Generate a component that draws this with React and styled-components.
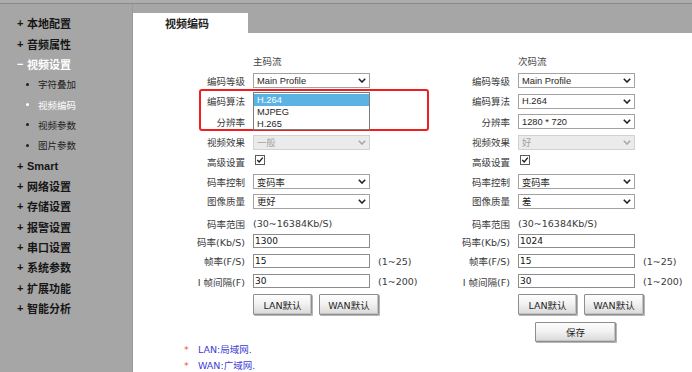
import React from 'react';
import styled, { createGlobalStyle } from 'styled-components';

const GlobalStyle = createGlobalStyle`
  html, body { margin: 0; padding: 0; }
  body {
    background: #a6a6a6;
    font-family: "DejaVu Sans", "Noto Sans CJK SC", sans-serif;
    -webkit-font-smoothing: antialiased;
  }
  * { box-sizing: border-box; }
`;

const Page = styled.div`
  width: 692px;
  height: 372px;
  overflow: hidden;
  display: flex;
  flex-direction: column;
  background: #a6a6a6;
`;

const TopEdge = styled.div`
  flex: none;
  height: 4px;
  background: #adadad;
  border-bottom: 1px solid #8a8a8a;
`;

const Body = styled.div`
  flex: 1;
  display: flex;
  min-height: 0;
`;

const Sidebar = styled.nav`
  flex: none;
  width: 133px;
  border-right: 1px solid #9a9a9a;
  padding: 9px 0 0 17px;
  display: flex;
  flex-direction: column;
`;

const NavItem = styled.div`
  height: 20.36px;
  display: flex;
  align-items: center;
  color: ${p => (p.$active ? '#ffffff' : '#161616')};
  font-family: ${p => (p.$latin ? '"Liberation Sans", "Noto Sans CJK SC", sans-serif' : '"Noto Sans CJK SC", sans-serif')};
  font-size: 11px;
  font-weight: 700;
  white-space: nowrap;
`;

const Marker = styled.span`
  width: 10px;
  font-family: "Liberation Sans", sans-serif;
  font-size: 11px;
  font-weight: 700;
`;

const SubItem = styled.div`
  height: 20.36px;
  display: flex;
  align-items: center;
  padding-left: 9px;
  color: ${p => (p.$active ? '#ffffff' : '#222222')};
  font-family: "Noto Sans CJK SC", sans-serif;
  font-size: 9.5px;
  white-space: nowrap;
`;

const Dot = styled.span`
  width: 3px;
  height: 3px;
  border-radius: 50%;
  background: currentColor;
  margin-right: 9px;
`;

const Main = styled.main`
  flex: 1;
  display: flex;
  flex-direction: column;
  min-width: 0;
`;

const TabStrip = styled.div`
  flex: none;
  height: 29px;
  display: flex;
  align-items: flex-end;
`;

const Tab = styled.div`
  width: 115px;
  height: 20px;
  background: #ffffff;
  padding-left: 32px;
  display: flex;
  align-items: center;
  font-family: "Noto Sans CJK SC", sans-serif;
  font-size: 11px;
  font-weight: 700;
  color: #222;
`;

const Content = styled.section`
  flex: 1;
  position: relative;
  background: #ffffff;
  padding-top: 18px;
`;

const Form = styled.div`
  display: flex;
  align-items: flex-start;
  padding-left: 32px;
`;

const Panel = styled.div`
  width: 265px;
  display: grid;
  grid-template-columns: 80px 117px 52px;
  column-gap: 8px;
  grid-template-rows: 19px 21px 20px 21px 20px 20px 19px 20px 21px 19px 20px 21px 25px ${p => (p.$save ? '25px' : '')};
  align-items: center;
  font-size: 9.5px;
  color: #3a3a3a;
`;

const Heading = styled.div`
  grid-column: 2;
  font-family: "Noto Sans CJK SC", sans-serif;
  font-size: 9.5px;
  color: #444;
`;

const Label = styled.div`
  grid-column: 1;
  justify-self: end;
  white-space: nowrap;
  padding-top: ${p => p.$shift || 0}px;
`;

const Cell = styled.div`
  grid-column: 2;
  position: relative;
  min-height: 15px;
  padding-top: ${p => p.$shift || 0}px;
  white-space: nowrap;
`;

const Suffix = styled.div`
  grid-column: 3;
  white-space: nowrap;
`;

const SelectBox = styled.div`
  height: 15px;
  display: flex;
  align-items: center;
  justify-content: space-between;
  padding: 0 3px 0 3px;
  border: 1px solid ${p => (p.$disabled ? '#d2d2d2' : '#a2a2a2')};
  background: ${p => (p.$disabled ? '#ebebeb' : '#ffffff')};
  color: ${p => (p.$disabled ? '#a3a3a3' : '#1e1e1e')};
  font-family: "Liberation Sans", "Noto Sans CJK SC", sans-serif;
  font-size: 9.3px;
`;

const ListBox = styled.div`
  position: absolute;
  z-index: 2;
  left: 0;
  top: -2px;
  width: 117px;
  height: 38px;
  padding: 1px 0;
  background: #ffffff;
  border: 1px solid #7c7c7c;
  font-family: "Liberation Sans", sans-serif;
  font-size: 9.3px;
`;

const ListOption = styled.div`
  height: 12px;
  line-height: 12px;
  padding-left: 3px;
  background: ${p => (p.$selected ? '#5bb3e4' : 'transparent')};
  color: ${p => (p.$selected ? '#ffffff' : '#1e1e1e')};
`;

const TextInput = styled.div`
  height: 14px;
  border: 1px solid #8c8c8c;
  background: #fff;
  padding-left: 1px;
  font-size: 9px;
  line-height: 12px;
  color: #111;
`;

const CheckWrap = styled.div`
  display: flex;
  padding-left: 2px;
`;

const ButtonRow = styled.div`
  grid-column: 2 / 4;
  display: flex;
  gap: 7px;
`;

const Button = styled.button`
  width: ${p => p.$w || 59}px;
  height: ${p => p.$h || 21}px;
  margin: 0;
  padding: 0;
  border: 1px solid #8e8e8e;
  border-radius: 1px;
  background: linear-gradient(#fefefe, #f2f2f2 45%, #d9d9d9);
  box-shadow: inset -1px -1px 0 #c4c4c4, 1px 1px 0 #b5b5b5;
  font-family: "DejaVu Sans", "Noto Sans CJK SC", sans-serif;
  font-size: 9.5px;
  color: #262626;
`;

const SaveCell = styled.div`
  grid-column: 2;
  align-self: end;
  padding-left: 17px;
`;

const Notes = styled.div`
  padding-left: 51px;
  font-size: 9.5px;
  line-height: 16px;
`;

const Note = styled.div`
  display: flex;
  color: #3d3dd4;
`;

const Star = styled.span`
  width: 14px;
  color: #ff4b4b;
`;

const Annotation = styled.div`
  position: absolute;
  left: 66px;
  top: 56px;
  width: 230px;
  height: 42px;
  border: 2px solid #f01e1e;
  border-radius: 3px;
  pointer-events: none;
`;

const Chevron = ({ color }) => (
  <svg width="8" height="5" viewBox="0 0 8 5">
    <polyline points="0.8,0.8 4,4 7.2,0.8" fill="none" stroke={color} strokeWidth="1.6" />
  </svg>
);

const Select = ({ value, disabled }) => (
  <SelectBox $disabled={disabled}>
    <span>{value}</span>
    <Chevron color={disabled ? '#a8a8a8' : '#1d2330'} />
  </SelectBox>
);

const Checkbox = () => (
  <svg width="10" height="10" viewBox="0 0 10 10">
    <rect x="0.5" y="0.5" width="9" height="9" fill="#fff" stroke="#5a5a5a" />
    <polyline points="2.3,5 4.2,7 7.8,2.6" fill="none" stroke="#1a1a1a" strokeWidth="1.3" />
  </svg>
);

const StreamPanel = ({ title, codec, resolution, effect, quality, bitrate, open, save }) => (
  <Panel $save={save}>
    <Heading>{title}</Heading>
    <Label>编码等级</Label>
    <Cell><Select value="Main Profile" /></Cell>
    <Label>编码算法</Label>
    <Cell>
      <Select value={codec} />
      {open && (
        <ListBox>
          <ListOption $selected>H.264</ListOption>
          <ListOption>MJPEG</ListOption>
          <ListOption>H.265</ListOption>
        </ListBox>
      )}
    </Cell>
    <Label>分辨率</Label>
    <Cell>{!open && <Select value={resolution} />}</Cell>
    <Label>视频效果</Label>
    <Cell><Select value={effect} disabled /></Cell>
    <Label>高级设置</Label>
    <Cell><CheckWrap><Checkbox /></CheckWrap></Cell>
    <Label>码率控制</Label>
    <Cell><Select value="变码率" /></Cell>
    <Label>图像质量</Label>
    <Cell><Select value={quality} /></Cell>
    <Label $shift={4}>码率范围</Label>
    <Cell $shift={4}>(30~16384Kb/S)</Cell>
    <Label>码率(Kb/S)</Label>
    <Cell><TextInput>{bitrate}</TextInput></Cell>
    <Label>帧率(F/S)</Label>
    <Cell><TextInput>15</TextInput></Cell>
    <Suffix>(1~25)</Suffix>
    <Label>I 帧间隔(F)</Label>
    <Cell><TextInput>30</TextInput></Cell>
    <Suffix>(1~200)</Suffix>
    <ButtonRow>
      <Button $w={59}>LAN默认</Button>
      <Button $w={60}>WAN默认</Button>
    </ButtonRow>
    {save && (
      <SaveCell>
        <Button $w={81} $h={20}>保存</Button>
      </SaveCell>
    )}
  </Panel>
);

const topItems = ['本地配置', '音频属性'];
const subItems = ['字符叠加', '视频编码', '视频参数', '图片参数'];
const lowerItems = ['网络设置', '存储设置', '报警设置', '串口设置', '系统参数', '扩展功能', '智能分析'];

export default function App() {
  return (
    <Page>
      <GlobalStyle />
      <TopEdge />
      <Body>
        <Sidebar>
          {topItems.map(t => (
            <NavItem key={t}><Marker>+</Marker>{t}</NavItem>
          ))}
          <NavItem $active><Marker>−</Marker>视频设置</NavItem>
          {subItems.map(t => (
            <SubItem key={t} $active={t === '视频编码'}><Dot />{t}</SubItem>
          ))}
          <NavItem $latin><Marker>+</Marker>Smart</NavItem>
          {lowerItems.map(t => (
            <NavItem key={t}><Marker>+</Marker>{t}</NavItem>
          ))}
        </Sidebar>
        <Main>
          <TabStrip>
            <Tab>视频编码</Tab>
          </TabStrip>
          <Content>
            <Form>
              <StreamPanel title="主码流" codec="H.264" resolution="1280 * 720" effect="一般" quality="更好" bitrate="1300" open />
              <StreamPanel title="次码流" codec="H.264" resolution="1280 * 720" effect="好" quality="差" bitrate="1024" save />
            </Form>
            <Notes>
              <Note><Star>*</Star>LAN:局域网.</Note>
              <Note><Star>*</Star>WAN:广域网.</Note>
            </Notes>
            <Annotation />
          </Content>
        </Main>
      </Body>
    </Page>
  );
}
